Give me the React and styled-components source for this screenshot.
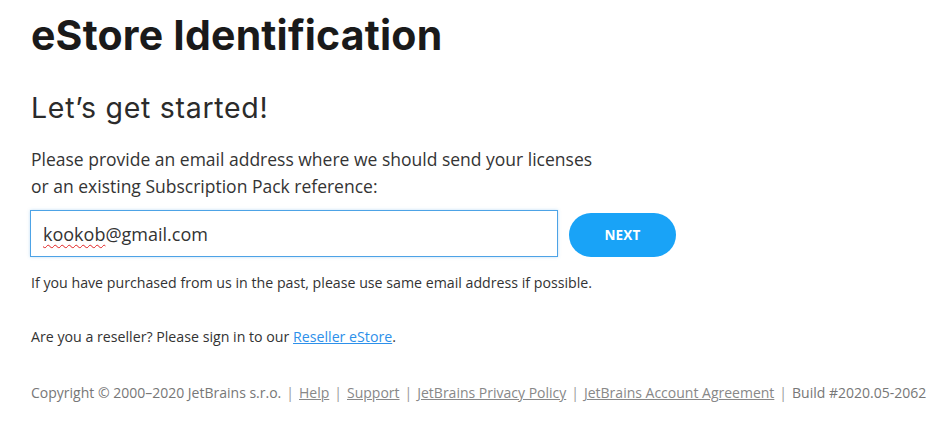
import styled, { createGlobalStyle } from "styled-components";

const GlobalStyle = createGlobalStyle`
  body {
    margin: 0;
    background: #fff;
    font-family: "Open Sans", "Liberation Sans", sans-serif;
    color: #343434;
  }
`;

const Page = styled.div`
  padding: 10px 0 0 31px;
`;

const Title = styled.h1`
  margin: 0;
  font-family: "Inter", "Liberation Sans", sans-serif;
  font-weight: 700;
  font-size: 41px;
  line-height: 50px;
  letter-spacing: 0.2px;
  color: #1a1a1a;
`;

const Subtitle = styled.h2`
  margin: 30px 0 0;
  font-family: "Inter", "Liberation Sans", sans-serif;
  font-weight: 400;
  font-size: 28.5px;
  line-height: 36px;
  letter-spacing: 0.7px;
  color: #2b2b2b;
`;

const Lead = styled.p`
  margin: 20px 0 0;
  font-size: 17.5px;
  line-height: 27px;
  color: #343434;
`;

const FormRow = styled.div`
  display: flex;
  align-items: center;
  gap: 11px;
  margin-top: 10px;
  margin-left: -1px;
`;

const Field = styled.div`
  box-sizing: border-box;
  width: 528px;
  height: 47px;
  padding: 0 12px;
  display: flex;
  align-items: center;
  border: 1px solid #4da3e6;
  box-shadow: 0 0 3px rgba(77, 163, 230, 0.35);
  font-size: 18px;
  color: #333;
  background: #fff;
`;

const Misspelled = styled.span`
  text-decoration: underline wavy #e02020;
  text-decoration-thickness: 1px;
  text-underline-offset: 3px;
`;

const NextButton = styled.button`
  width: 107px;
  height: 44px;
  margin-top: 2px;
  border: none;
  border-radius: 22px;
  background: #19a3f7;
  color: #fff;
  font-family: "Open Sans", "Liberation Sans", sans-serif;
  font-weight: 700;
  font-size: 13.5px;
  letter-spacing: 0.2px;
  cursor: pointer;
`;

const Note = styled.p`
  margin: ${(p) => p.$top}px 0 0;
  font-size: 14.2px;
  line-height: 20px;
  color: #333;
`;

const Link = styled.a`
  color: #2d90ea;
  text-decoration: underline;
`;

const Footer = styled.p`
  margin: 36px 0 0;
  font-size: 14px;
  line-height: 20px;
  color: #777;
  white-space: nowrap;
`;

const FooterLink = styled.a`
  color: #888;
  text-decoration: underline;
`;

const Sep = styled.span`
  color: #999;
  margin: 0 5px;
`;

export default function App() {
  return (
    <>
      <GlobalStyle />
      <Page>
        <Title>eStore Identification</Title>
        <Subtitle>Let’s get started!</Subtitle>
        <Lead>
          Please provide an email address where we should send your licenses
          <br />
          or an existing Subscription Pack reference:
        </Lead>
        <FormRow>
          <Field>
            <Misspelled>kookob</Misspelled>@gmail.com
          </Field>
          <NextButton>NEXT</NextButton>
        </FormRow>
        <Note $top={16}>
          If you have purchased from us in the past, please use same email
          address if possible.
        </Note>
        <Note $top={34}>
          Are you a reseller? Please sign in to our{" "}
          <Link href="#">Reseller eStore</Link>.
        </Note>
        <Footer>
          Copyright © 2000–2020 JetBrains s.r.o.
          <Sep>|</Sep>
          <FooterLink href="#">Help</FooterLink>
          <Sep>|</Sep>
          <FooterLink href="#">Support</FooterLink>
          <Sep>|</Sep>
          <FooterLink href="#">JetBrains Privacy Policy</FooterLink>
          <Sep>|</Sep>
          <FooterLink href="#">JetBrains Account Agreement</FooterLink>
          <Sep>|</Sep>
          Build #2020.05-2062
        </Footer>
      </Page>
    </>
  );
}
